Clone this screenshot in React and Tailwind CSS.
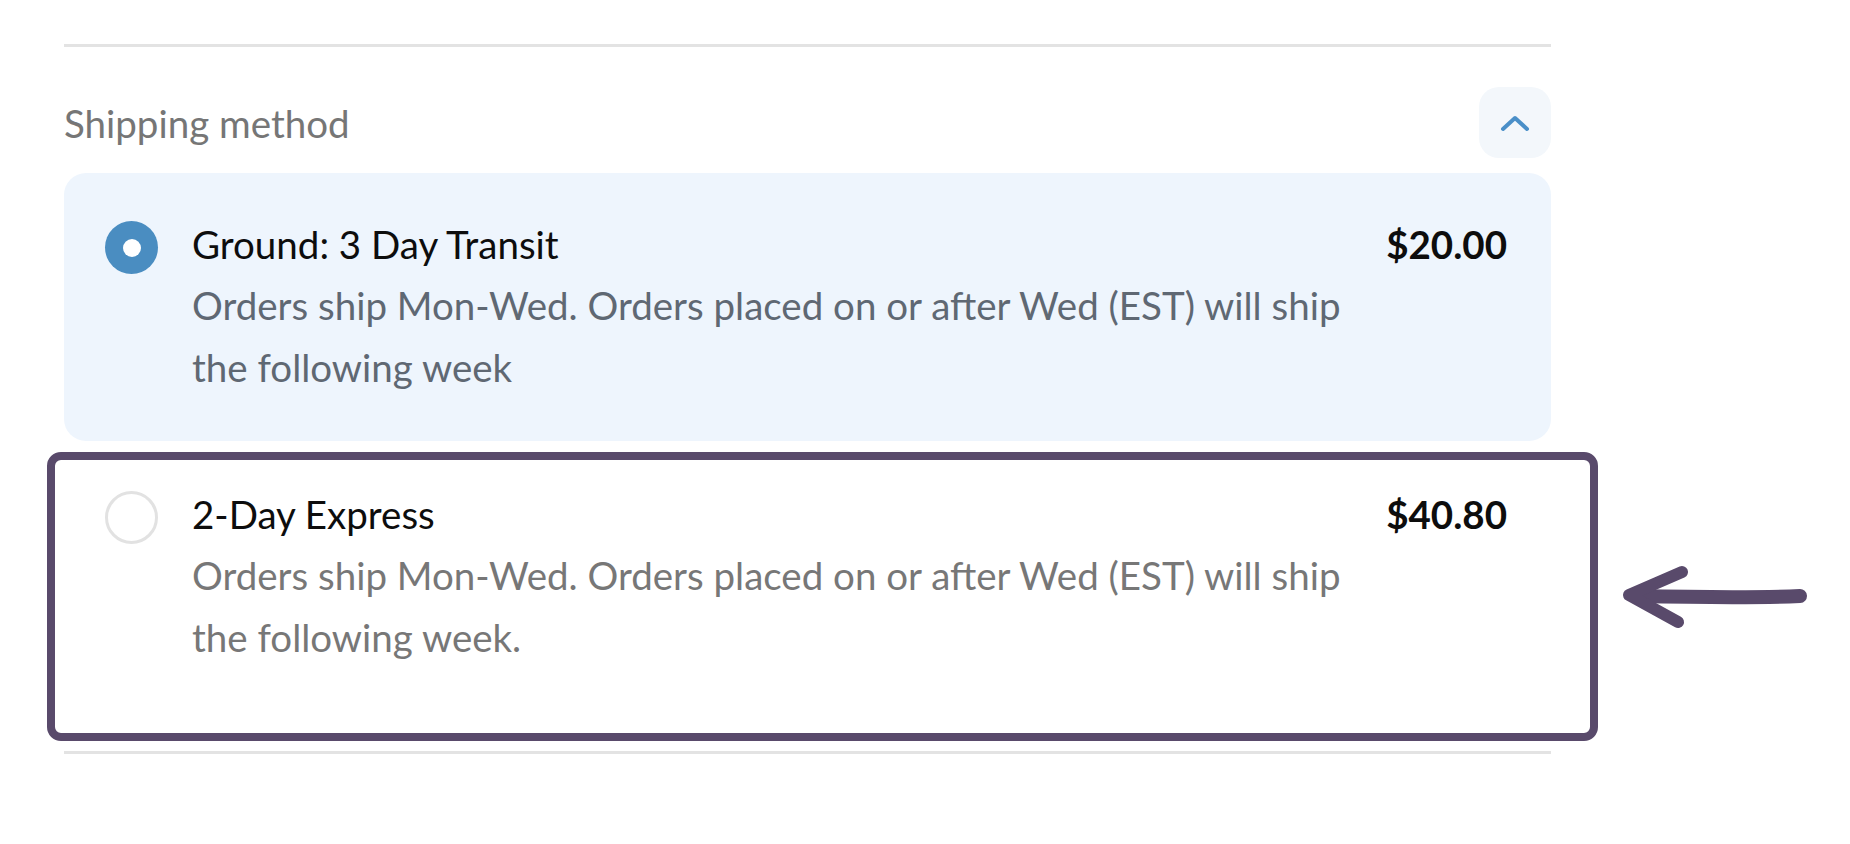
import React from "react";

const options = [
  {
    id: "ground",
    title: "Ground: 3 Day Transit",
    price: "$20.00",
    desc: "Orders ship Mon-Wed. Orders placed on or after Wed (EST) will ship the following week",
    selected: true,
  },
  {
    id: "express",
    title: "2-Day Express",
    price: "$40.80",
    desc: "Orders ship Mon-Wed. Orders placed on or after Wed (EST) will ship the following week.",
    selected: false,
  },
];

function Radio({ checked }) {
  if (checked) {
    return (
      <span className="mt-[9px] flex h-[53px] w-[53px] shrink-0 items-center justify-center rounded-full bg-[#4a8dc1]">
        <span className="h-[18px] w-[18px] rounded-full bg-white" />
      </span>
    );
  }
  return <span className="mt-[9px] h-[53px] w-[53px] shrink-0 rounded-full border-[3px] border-[#e2e2e2] bg-white" />;
}

function Option({ opt }) {
  return (
    <div
      className={
        "flex items-start rounded-[22px] pl-[41px] pr-[44px] pt-[39px] pb-[43px] " +
        (opt.selected ? "bg-[#eef5fd]" : "bg-white")
      }
    >
      <Radio checked={opt.selected} />
      <div className="ml-[34px] w-[1165px]">
        <div className="pt-[2px] text-[38.5px] leading-[60px] text-[#0d0d0d]">{opt.title}</div>
        <div
          className={
            "text-[38.5px] leading-[62px] " + (opt.selected ? "text-[#5f6873]" : "text-[#777]")
          }
        >
          {opt.desc}
        </div>
      </div>
      <div className="ml-auto pt-[2px] text-[38.5px] font-bold leading-[60px] text-[#0d0d0d]">{opt.price}</div>
    </div>
  );
}

function Arrow() {
  return (
    <svg width="200" height="70" viewBox="0 0 200 70" fill="none">
      <path d="M186 34 C140 36 70 35 22 34" stroke="#594a6b" strokeWidth="14" strokeLinecap="round" />
      <path d="M68 10 L15 33 L64 60" stroke="#594a6b" strokeWidth="12" strokeLinecap="round" strokeLinejoin="round" />
    </svg>
  );
}

export default function App() {
  return (
    <div className="relative h-[844px] w-[1850px] bg-white pt-[44px]" style={{ fontFamily: "Lato, 'Liberation Sans', sans-serif" }}>
      <section className="ml-[64px] w-[1487px] border-y-[3px] border-[#e3e3e3] pt-[40px] pb-[40px]">
        <div className="flex items-center justify-between">
          <h2 className="text-[38.5px] leading-[62px] text-[#767676]">Shipping method</h2>
          <button className="flex h-[71px] w-[72px] items-center justify-center rounded-[20px] bg-[#f3f7fb]">
            <svg width="30" height="18" viewBox="0 0 30 18" fill="none">
              <path d="M3 15 L15 4 L27 15" stroke="#4a8fc8" strokeWidth="4" strokeLinecap="round" strokeLinejoin="round" />
            </svg>
          </button>
        </div>
        <div className="mt-[15px] flex flex-col">
          <Option opt={options[0]} />
          <div className="relative">
            <div className="pt-[2px]">
              <Option opt={options[1]} />
            </div>
            <div className="pointer-events-none absolute -left-[17px] -right-[47px] top-[11px] -bottom-[30px] rounded-[14px] border-[8px] border-[#594a6b]" />
          </div>
        </div>
      </section>
      <div className="absolute left-[1614px] top-[562px]">
        <Arrow />
      </div>
    </div>
  );
}
